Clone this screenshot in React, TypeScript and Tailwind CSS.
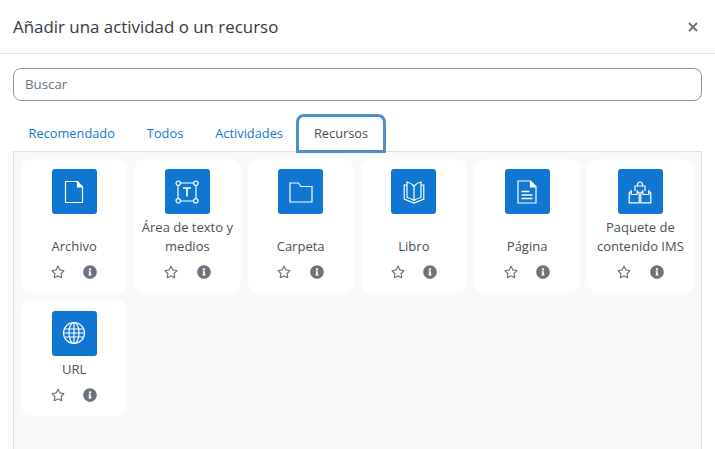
import type { ReactNode } from 'react';
import { FaInfoCircle, FaRegStar } from 'react-icons/fa';

const iconProps = {
    viewBox: '0 0 24 24',
    fill: 'none',
    stroke: 'white',
    strokeWidth: 1.2,
    className: 'w-6 h-6',
};

const FileIcon = () => (
    <svg {...iconProps}>
        <path d="M3.5 1.5h12l5 5.5v15.5h-17z" />
        <path d="M15.5 1.5V7h5" fill="white" />
    </svg>
);

const TextAreaIcon = () => (
    <svg {...iconProps}>
        <path d="M5 3h14M5 21h14M3 5v14M21 5v14" />
        <circle cx="3.2" cy="3.2" r="2.2" />
        <circle cx="20.8" cy="3.2" r="2.2" />
        <circle cx="3.2" cy="20.8" r="2.2" />
        <circle cx="20.8" cy="20.8" r="2.2" />
        <path d="M8 8h8M12 8v8.5" strokeWidth={1.7} />
    </svg>
);

const FolderIcon = () => (
    <svg {...iconProps}>
        <path d="M1 3h8.5l2.5 3.5h11V22H1z" />
    </svg>
);

const BookIcon = () => (
    <svg {...iconProps}>
        <path d="M12 6C10 4 7.500 2.500 5 2v15.500c2.500.5 5 1.500 7 3 2-1.500 4.500-2.500 7-3V2c-2.500.5-5 2-7 4z" />
        <path d="M12 6v14.500" />
        <path d="M5 5H2.200v14L12 23l9.800-4V5H19" />
    </svg>
);

const PageIcon = () => (
    <svg {...iconProps}>
        <path d="M3 1h12.500l5.500 5.500V23H3z" />
        <path d="M15.500 1v6H21" fill="white" />
        <path d="M6.500 11.500h8M6.500 15h11M6.500 18.500h11" strokeWidth={1.3} />
    </svg>
);

const PackageIcon = () => (
    <svg {...iconProps}>
        {/* top box with handle */}
        <path d="M7 11V6h10v5" />
        <path d="M9.500 6V4.500a2.500 2.500 0 0 1 5 0V6" />
        {/* lower boxes with open flaps */}
        <path d="M1.200 22.800V13l2-2v3.500h6V11l2 2v9.800z" />
        <path d="M12.800 22.800V13l2-2v3.500h6V11l2 2v9.800z" />
    </svg>
);

const GlobeIcon = () => (
    <svg {...iconProps} strokeWidth={1.2}>
        <circle cx="12" cy="12" r="10.500" />
        <ellipse cx="12" cy="12" rx="5" ry="10.500" />
        <path d="M12 1.500v21M2.500 8h19M2.500 16h19M1.500 12h21" />
    </svg>
);

const activities: { name: ReactNode; icon: ReactNode }[] = [
    { name: 'Archivo', icon: <FileIcon /> },
    { name: <>Área de texto y<br />medios</>, icon: <TextAreaIcon /> },
    { name: 'Carpeta', icon: <FolderIcon /> },
    { name: 'Libro', icon: <BookIcon /> },
    { name: 'Página', icon: <PageIcon /> },
    { name: <>Paquete de<br />contenido IMS</>, icon: <PackageIcon /> },
    { name: 'URL', icon: <GlobeIcon /> },
];

function ActivityCard({ name, icon }: { name: ReactNode; icon: ReactNode }) {
    return (
        <div className="bg-white rounded-[10px] pt-[10.4px] pb-[13px] flex flex-col items-center">
            <div className="w-[45px] h-[45px] bg-[#0f77d2] rounded-[3px] flex items-center justify-center">
                {icon}
            </div>
            <div className="flex-1 flex items-end justify-center text-center text-[13px] leading-[19px] text-[#495057] mt-[4px] whitespace-nowrap">
                <span>{name}</span>
            </div>
            <div className="flex items-center justify-center gap-[18.5px] mt-[8px] h-[16px] text-[#6a737b]">
                <FaRegStar className="w-[14px] h-[14px]" />
                <FaInfoCircle className="w-[14px] h-[14px]" />
            </div>
        </div>
    );
}

export default function App() {
    return (
        <div className="w-[715px] h-[449px] overflow-hidden bg-white flex flex-col font-['Open_Sans',sans-serif]">
            {/* Header */}
            <div className="h-[54px] shrink-0 border-b border-[#dee2e6] pl-[13px] pr-[16px] flex items-center justify-between">
                <h5 className="text-[16.9px] text-[#343a40]">Añadir una actividad o un recurso</h5>
                <svg viewBox="0 0 10 10" className="w-[10px] h-[10px] mr-[1px]" stroke="#6a737b" strokeWidth={1.8}>
                    <path d="M1 1l8 8M9 1l-8 8" />
                </svg>
            </div>

            <div className="flex-1 flex flex-col px-[13px] pt-[14px] min-h-0">
                {/* Search */}
                <div className="h-[33px] shrink-0 border border-[#8f959e] rounded-[8px] pl-[11px] flex items-center text-[13.3px] text-[#6a737b]">
                    Buscar
                </div>

                {/* Tabs */}
                <div className="relative z-10 flex items-stretch h-[39px] mt-[13px] -mb-[2px] text-[12.8px] text-[#1177d1] shrink-0">
                    <span className="pl-[15.600px] pr-[16px] flex items-center">Recomendado</span>
                    <span className="pl-[16px] pr-[16px] flex items-center">Todos</span>
                    <span className="pl-[16px] pr-[15px] flex items-center">Actividades</span>
                    <span className="-ml-[2px] px-[15px] flex items-center bg-white text-[#495057] border-[3px] border-[#4f8fc9] rounded-t-[8px]">
                        Recursos
                    </span>
                </div>

                {/* Activity grid */}
                <div className="flex-1 bg-[#f8f9fa] border border-[#dee2e6] border-b-0 pl-[7px] pr-[7.5px] py-[7px] min-h-0">
                    <div className="grid grid-cols-6 gap-[7px]">
                        {activities.map((a, i) => (
                            <ActivityCard key={i} name={a.name} icon={a.icon} />
                        ))}
                    </div>
                </div>
            </div>
        </div>
    );
}
